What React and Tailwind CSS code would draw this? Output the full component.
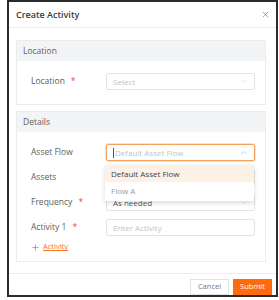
import { ChevronDown, ChevronUp, X, Plus } from "lucide-react";

const font = { fontFamily: "'Open Sans', 'Liberation Sans', sans-serif" };

function Label({ text, required }) {
  return (
    <div className="w-[89px] shrink-0 pl-[14px] flex items-center text-[8.5px] text-[#5e5e5e]">
      <span>{text}</span>
      {required && <span className="ml-[6px] text-[#e5484d]">*</span>}
    </div>
  );
}

function Field({ placeholder, value, chevron, active }) {
  return (
    <div
      className={`w-[149px] h-[17px] rounded-[2px] flex items-center px-[6px] text-[8px] ${
        active
          ? "border border-[#f6a05a] shadow-[0_0_0_1px_#fde3cc]"
          : "border border-[#e3e3e3]"
      }`}
    >
      {active && <span className="w-px h-[10px] bg-[#555] mr-px" />}
      <span className={`flex-1 truncate ${value ? "text-[#555]" : "text-[#c4c4c4]"}`}>
        {value || placeholder}
      </span>
      {chevron === "down" && <ChevronDown size={9} strokeWidth={1.2} className="text-[#c4c4c4]" />}
      {chevron === "up" && <ChevronUp size={9} strokeWidth={1.2} className="text-[#999]" />}
    </div>
  );
}

export default function App() {
  return (
    <div className="w-[279px] h-[300px] bg-white pl-[7px]" style={font}>
      <div className="w-[271px] h-[297px] border-2 border-[#2b2b2b] bg-white flex flex-col overflow-hidden">
        <div className="h-[26px] shrink-0 border-b border-[#ececec] flex items-center justify-between pl-[7px] pr-[6px]">
          <span className="text-[9px] font-semibold text-[#3a3a3a]">Create Activity</span>
          <X size={9} strokeWidth={1.8} className="text-[#e5484d]" />
        </div>

        <div className="flex-1 pl-[7px] pt-[12px] flex flex-col gap-[6px]">
          <div className="w-[250px] border border-[#ececec] flex flex-col">
            <div className="h-[20px] bg-[#f3f4f6] flex items-center pl-[6px] text-[8.5px] text-[#5e5e5e]">
              Location
            </div>
            <div className="pt-[12px] pb-[14px] flex items-center">
              <Label text="Location" required />
              <Field placeholder="Select" chevron="down" />
            </div>
          </div>

          <div className="w-[250px] border border-[#ececec] flex flex-col">
            <div className="h-[20px] bg-[#f3f4f6] flex items-center pl-[6px] text-[8.5px] text-[#5e5e5e]">
              Details
            </div>
            <div className="pt-[12px] pb-[9px] flex flex-col gap-[8px]">
              <div className="flex items-center relative">
                <Label text="Asset Flow" />
                <Field placeholder="Default Asset Flow" chevron="up" active />
                <div className="absolute left-[88px] top-[21px] w-[149px] bg-white shadow-[0_2px_5px_rgba(0,0,0,0.14)] z-10 text-[8px]">
                  <div className="h-[17px] bg-[#fdf1e6] flex items-center px-[6px] text-[#444]">
                    Default Asset Flow
                  </div>
                  <div className="h-[19px] flex items-center px-[6px] pb-[2px] text-[#9a9a9a]">Flow A</div>
                </div>
              </div>
              <div className="flex items-center">
                <Label text="Assets" />
                <Field chevron="down" />
              </div>
              <div className="flex items-center">
                <Label text="Frequency" required />
                <Field value="As needed" chevron="down" />
              </div>
              <div className="flex items-center">
                <Label text="Activity 1" required />
                <Field placeholder="Enter Activity" />
              </div>
              <div className="flex items-center pl-[14px] h-[10px] -mt-[2px] gap-[3px] text-[#f97316]">
                <Plus size={9} strokeWidth={2} />
                <span className="text-[7.5px] underline">Activity</span>
              </div>
            </div>
          </div>
        </div>

        <div className="h-[22px] shrink-0 border-t border-[#ececec] flex items-end justify-end gap-[4px] pr-[4px]">
          <button className="w-[39px] h-[16px] border border-[#e3e3e3] text-[7.5px] text-[#777] bg-white">
            Cancel
          </button>
          <button className="w-[39px] h-[16px] bg-[#ff6a0d] text-[7.5px] text-white font-medium">
            Submit
          </button>
        </div>
      </div>
    </div>
  );
}
